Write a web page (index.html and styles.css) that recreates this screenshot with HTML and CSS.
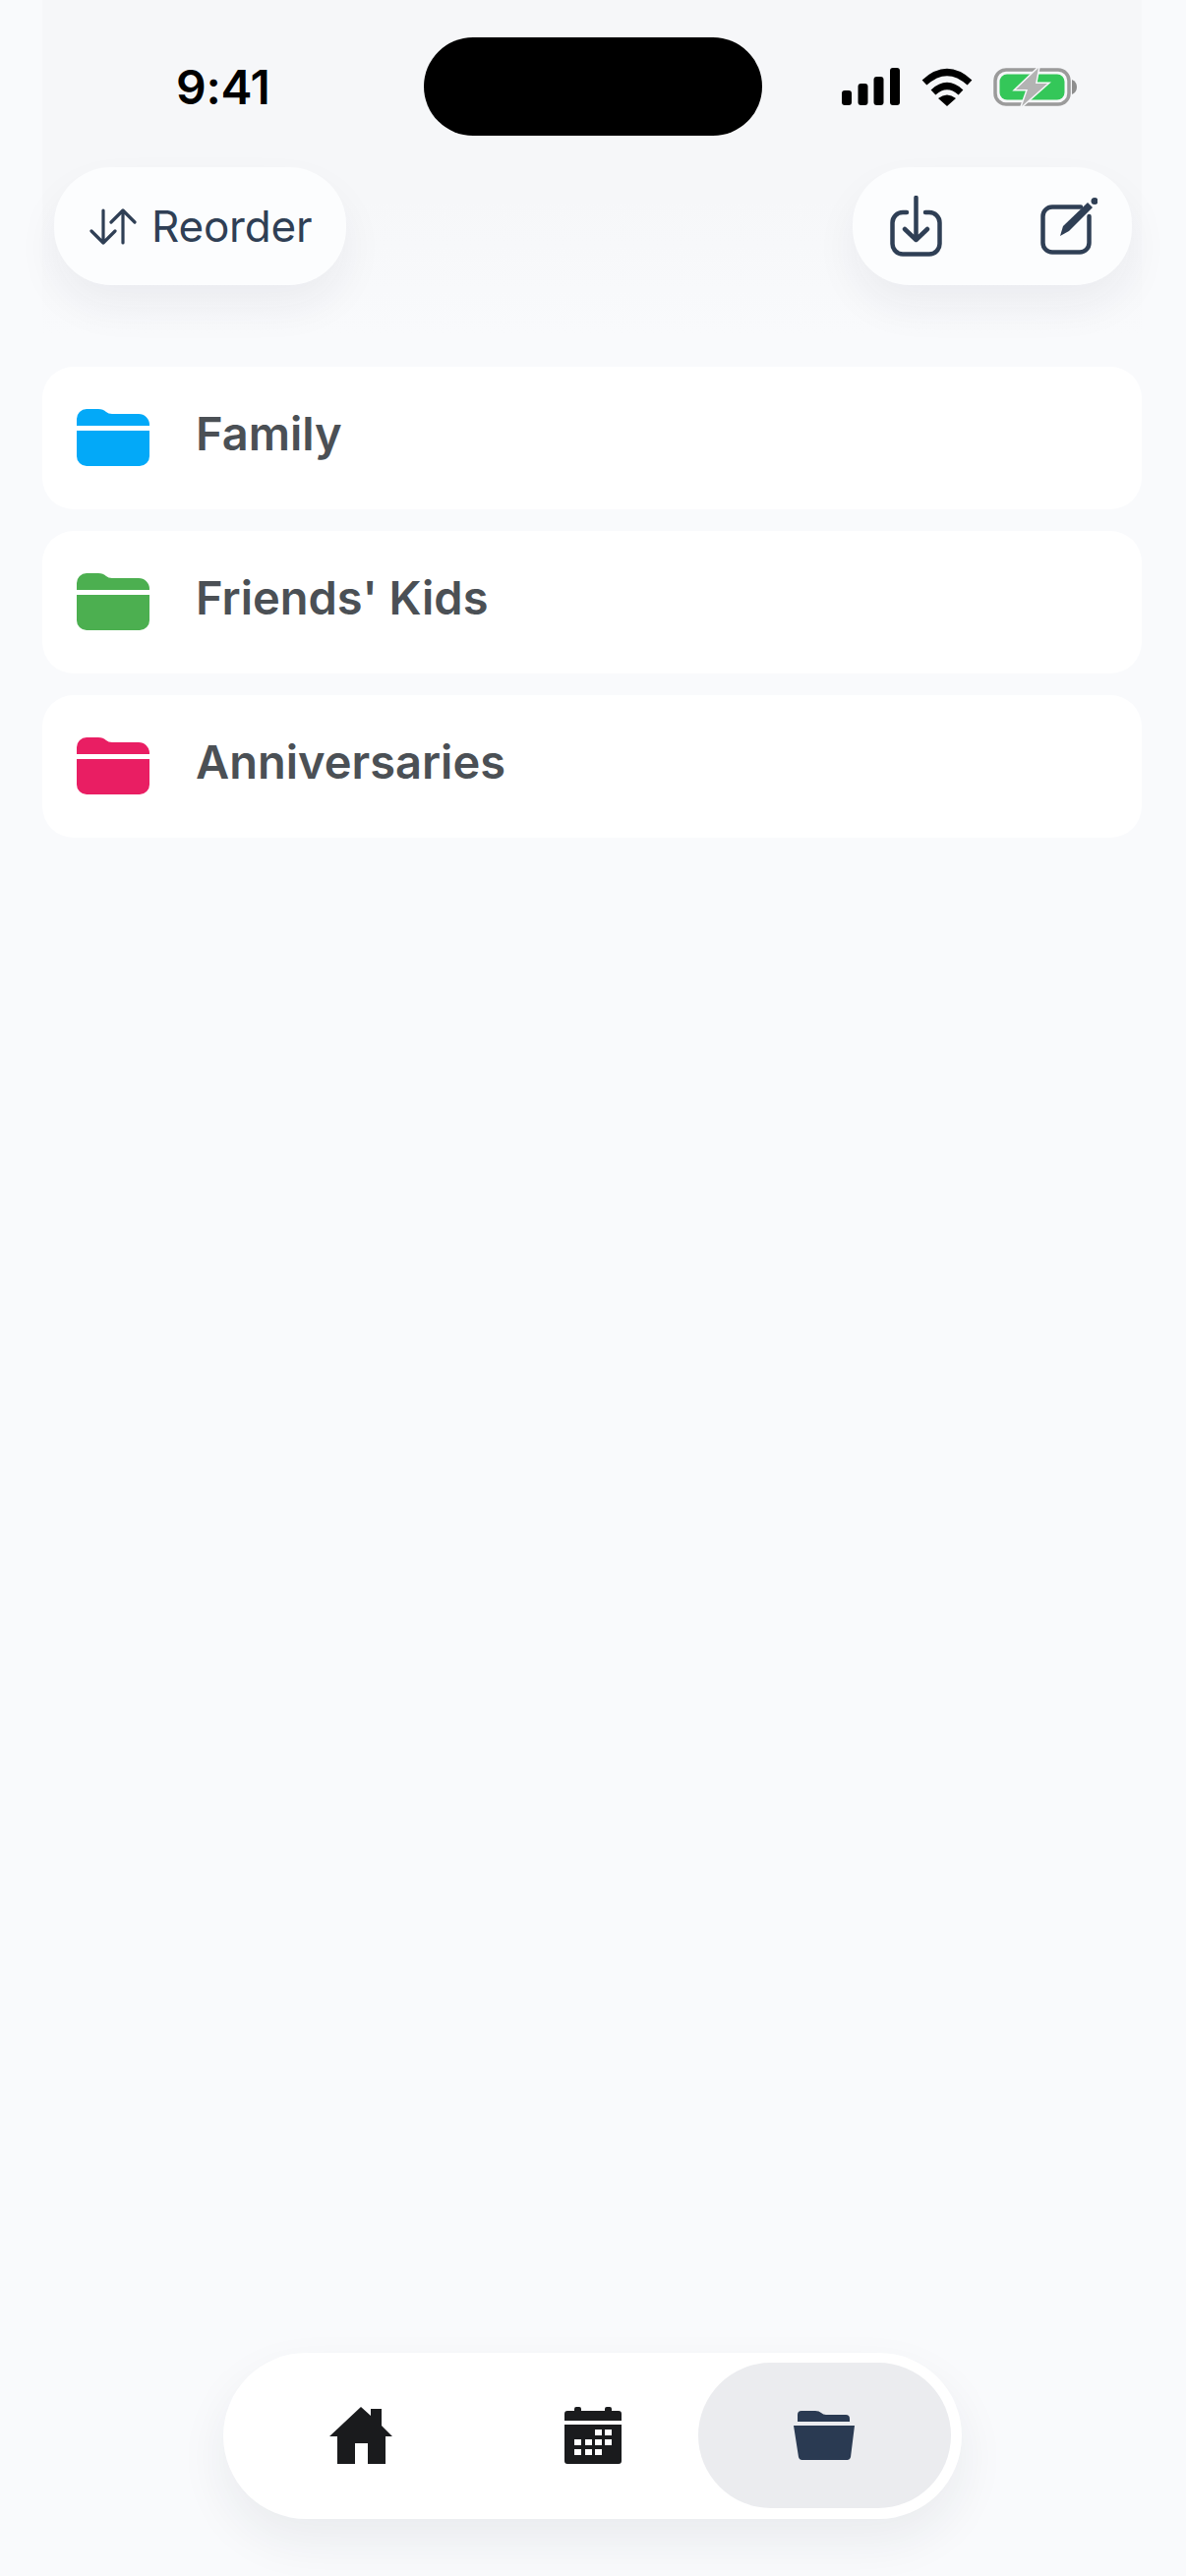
FILE: index.html
```html
<!DOCTYPE html>
<html>
	<head>
		<title>Folders</title>
		<link rel="stylesheet" href="styles.css">
	</head>
	<body>
		<div class="page">
			<div class="header">
				<div class="status">
					<div class="time">9:41</div>
					<div class="island"></div>
					<div class="status-icons">
						<svg class="signal" width="59" height="38" viewBox="0 0 59 38">
							<rect x="0" y="23" width="10" height="15" rx="3"/>
							<rect x="16.5" y="16" width="10" height="22" rx="3"/>
							<rect x="32.5" y="9" width="10" height="29" rx="3"/>
							<rect x="49" y="0" width="10" height="38" rx="3"/>
						</svg>
						<svg class="wifi" width="52" height="39" viewBox="0 0 52 39">
							<path d="M3 15 Q26 -6 49 15" fill="none" stroke="#000" stroke-width="7"/>
							<path d="M12 25 Q26 12 40 25" fill="none" stroke="#000" stroke-width="7"/>
							<path d="M17 31 Q26 24 35 31 L26 39 Z" fill="#000"/>
						</svg>
						<svg class="battery" width="86" height="39" viewBox="0 0 86 39">
							<rect x="2" y="2" width="75" height="35" rx="11" fill="none" stroke="#9b9b9b" stroke-width="3.5"/>
							<rect x="6.5" y="6.5" width="66" height="26" rx="7.5" fill="#34c759"/>
							<path d="M80 12 Q85 14 85 19.5 Q85 25 80 27 Z" fill="#8e8e8e"/>
							<path d="M46 0 L23 22 H35 L29 39 L55 16 H43 Z" fill="#b3b3b3" stroke="#f6f7f9" stroke-width="3" paint-order="stroke"/>
						</svg>
					</div>
				</div>
				<div class="actions">
					<div class="pill reorder">
						<svg width="48" height="37" viewBox="0 0 48 37" fill="none" stroke="#2f3f55" stroke-width="3.2" stroke-linecap="round" stroke-linejoin="round">
							<path d="M14 2 V35 M2 23 L14 35 L26 23"/>
							<path d="M34 35 V2 M22 14 L34 2 L46 14"/>
						</svg>
						<span>Reorder</span>
					</div>
					<div class="pill tools">
						<svg width="53" height="62" viewBox="0 0 53 62" fill="none" stroke="#2f3f55" stroke-width="4.5" stroke-linecap="round" stroke-linejoin="round">
							<path d="M17 17 H13 A10.500 10.500 0 0 0 2.500 27.500 V49 A10.500 10.500 0 0 0 13 59.500 H40 A10.500 10.500 0 0 0 50.500 49 V27.500 A10.500 10.500 0 0 0 40 17 H36"/>
							<path d="M26.500 2 V45 M15 34 L26.500 45 L38 34"/>
						</svg>
						<svg width="58" height="58" viewBox="0 0 58 58" fill="none" stroke="#2f3f55" stroke-width="4.5" stroke-linecap="round" stroke-linejoin="round">
							<path d="M41 9.500 H12 A9.500 9.500 0 0 0 2.500 19 V46 A9.500 9.500 0 0 0 12 55.500 H40 A9.500 9.500 0 0 0 49.500 46 V19"/>
							<path d="M20 39 L23 29 L48 5 L53 10 L29 34 Z" fill="#2f3f55" stroke="none"/>
							<circle cx="55" cy="3.500" r="3.500" fill="#2f3f55" stroke="none"/>
						</svg>
					</div>
				</div>
			</div>

			<div class="list">
				<div class="row">
					<svg class="folder blue" width="74" height="58" viewBox="0 0 74 58">
						<path d="M0 17 V10 A10 10 0 0 1 10 0 H22 Q27 0 30 3 Q32 5 36 5 H63 A11 11 0 0 1 74 16 V17 Z"/>
						<path d="M0 22 H74 V48 A10 10 0 0 1 64 58 H10 A10 10 0 0 1 0 48 Z"/>
					</svg>
					<span class="name">Family</span>
				</div>
				<div class="row">
					<svg class="folder green" width="74" height="58" viewBox="0 0 74 58">
						<path d="M0 17 V10 A10 10 0 0 1 10 0 H22 Q27 0 30 3 Q32 5 36 5 H63 A11 11 0 0 1 74 16 V17 Z"/>
						<path d="M0 22 H74 V48 A10 10 0 0 1 64 58 H10 A10 10 0 0 1 0 48 Z"/>
					</svg>
					<span class="name">Friends' Kids</span>
				</div>
				<div class="row">
					<svg class="folder pink" width="74" height="58" viewBox="0 0 74 58">
						<path d="M0 17 V10 A10 10 0 0 1 10 0 H22 Q27 0 30 3 Q32 5 36 5 H63 A11 11 0 0 1 74 16 V17 Z"/>
						<path d="M0 22 H74 V48 A10 10 0 0 1 64 58 H10 A10 10 0 0 1 0 48 Z"/>
					</svg>
					<span class="name">Anniversaries</span>
				</div>
			</div>

			<div class="nav">
				<div class="nav-item home">
					<svg width="64" height="58" viewBox="0 0 64 58">
						<path d="M32 0 L42 9 V2 H53 V19 L64 30 H57 V58 H39 V37 H26 V58 H8 V30 H0 Z" fill="#1a1b1d"/>
					</svg>
				</div>
				<div class="nav-item calendar">
					<svg width="58" height="58" viewBox="0 0 58 58">
						<path d="M0 14 V7 A3 3 0 0 1 3 4 H10 V2 A2 2 0 0 1 12 0 H15 A2 2 0 0 1 17 2 V4 H41 V2 A2 2 0 0 1 43 0 H46 A2 2 0 0 1 48 2 V4 H55 A3 3 0 0 1 58 7 V14 Z" fill="#1a1b1d"/>
						<path d="M0 18 H58 V55 A3 3 0 0 1 55 58 H3 A3 3 0 0 1 0 55 Z" fill="#1a1b1d"/>
						<g fill="#fff">
							<rect x="31" y="23" width="7" height="6"/>
							<rect x="41" y="23" width="7" height="6"/>
							<rect x="10" y="33" width="7" height="6"/>
							<rect x="21" y="33" width="7" height="6"/>
							<rect x="31" y="33" width="7" height="6"/>
							<rect x="41" y="33" width="7" height="6"/>
							<rect x="10" y="43" width="7" height="6"/>
							<rect x="21" y="43" width="7" height="6"/>
							<rect x="31" y="43" width="7" height="6"/>
						</g>
					</svg>
				</div>
				<div class="nav-item active">
					<svg width="62" height="50" viewBox="0 0 62 50">
						<path d="M4 11 V4 A4 4 0 0 1 8 0 H22 Q26 0 28 2 Q30 4 33 4 H53 A4 4 0 0 1 57 8 V11 Z" fill="#2a3a52"/>
						<path d="M0 15 H62 L58 47 A4 4 0 0 1 54 50 H9 A4 4 0 0 1 5 47 Z" fill="#2a3a52"/>
					</svg>
				</div>
			</div>
		</div>
	</body>
</html>
```
FILE: styles.css
```css
html, body {
	margin: 0;
	padding: 0;
}

body {
	background-color: #f9fafc;
	font-family: Inter, "Liberation Sans", sans-serif;
}

.page {
	display: flex;
	flex-direction: column;
	height: 2620px;
	padding: 0 45px 58px 43px;
	box-sizing: border-box;
}

.header {
	height: 340px;
	background: linear-gradient(to bottom, #f6f7f9 0%, #f6f7f9 60%, #f9fafc 100%);
}

.status {
	display: flex;
	align-items: center;
	height: 100px;
	padding-top: 38px;
}

.time {
	width: 252px;
	padding-left: 136px;
	font-size: 48px;
	font-weight: 600;
	letter-spacing: -0.3px;
	color: #000000;
}

.island {
	width: 344px;
	height: 100px;
	border-radius: 50px;
	background-color: #000000;
}

.status-icons {
	display: flex;
	align-items: center;
	margin-left: 81px;
}

.wifi {
	margin-left: 22px;
}

.battery {
	margin-left: 21px;
}

.actions {
	display: flex;
	justify-content: space-between;
	margin-top: 32px;
	padding: 0 10px 0 12px;
}

.pill {
	display: flex;
	align-items: center;
	height: 120px;
	border-radius: 58px;
	background-color: #fcfdfe;
	box-shadow: 0 22px 44px rgba(30, 40, 60, 0.06);
}

.reorder {
	width: 297px;
	padding-left: 36px;
	box-sizing: border-box;
	font-size: 44px;
	letter-spacing: -0.2px;
	color: #2f3f55;
}

.reorder span {
	margin-left: 15px;
}

.tools {
	width: 284px;
	padding-left: 38px;
	box-sizing: border-box;
}

.tools svg + svg {
	margin-left: 100px;
}

.list {
	display: flex;
	flex-direction: column;
	gap: 22px;
	margin-top: 33px;
}

.row {
	display: flex;
	align-items: center;
	height: 145px;
	padding-left: 35px;
	border-radius: 32px;
	background-color: #ffffff;
}

.folder {
	margin-top: -2px;
	fill: currentColor;
}

.blue {
	color: #03a9f8;
}

.green {
	color: #4caf50;
}

.pink {
	color: #e91e63;
}

.name {
	margin-left: 47px;
	margin-top: -10px;
	font-size: 47px;
	font-weight: 600;
	color: #4b5055;
}

.nav {
	display: flex;
	align-self: center;
	width: 751px;
	height: 169px;
	margin-top: auto;
	padding: 10px 11px 11px;
	box-sizing: border-box;
	border-radius: 85px;
	background-color: #ffffff;
	box-shadow: 0 22px 50px rgba(30, 40, 60, 0.07);
}

.nav-item {
	display: flex;
	align-items: center;
	justify-content: center;
}

.home {
	width: 258px;
}

.calendar {
	width: 214px;
}

.active {
	width: 257px;
	border-radius: 74px;
	background-color: #ebecef;
}
```
